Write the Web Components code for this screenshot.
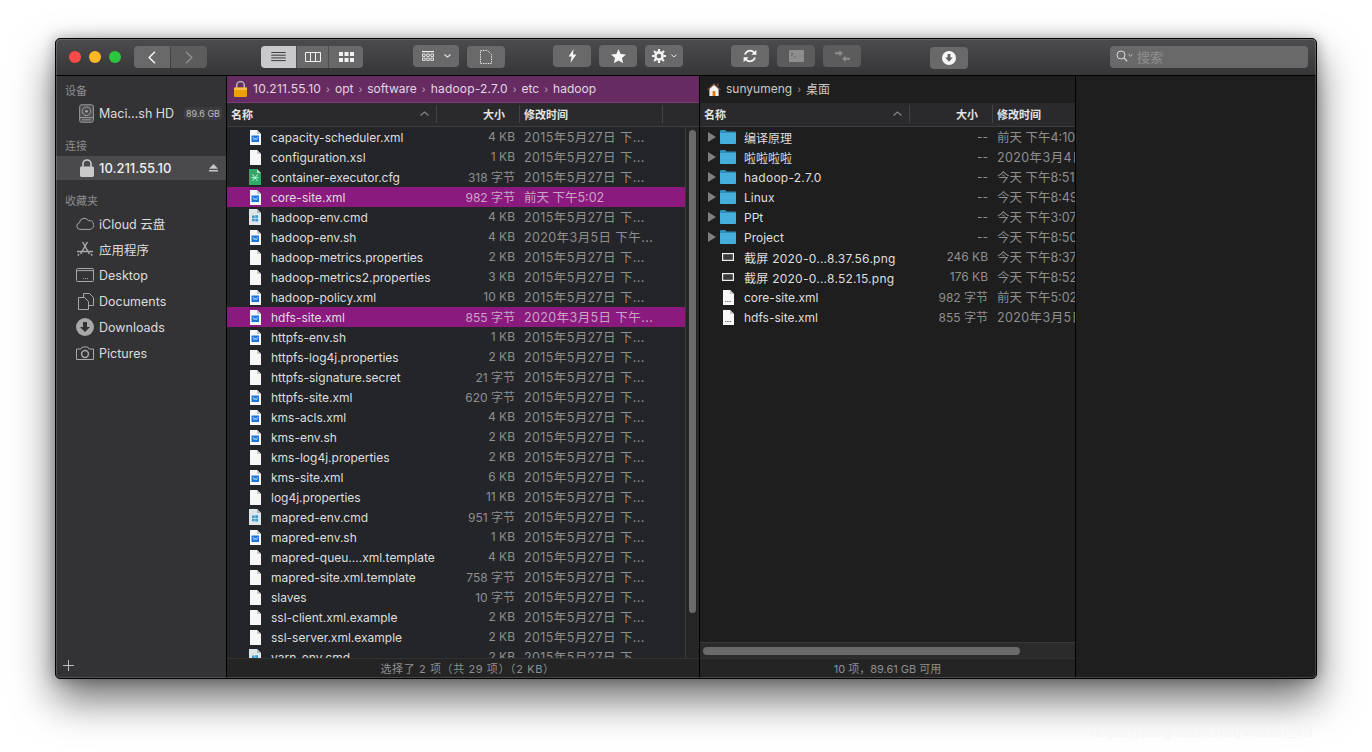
<!DOCTYPE html>
<html lang="zh">
<head>
<meta charset="utf-8">
<title>ForkLift</title>
<style>
  html, body { margin: 0; height: 100%; background: #fff; overflow: hidden; }
  body { padding: 38px 0 0 55px; box-sizing: border-box; position: relative;
         font-family: Inter, "Noto Sans CJK SC", sans-serif; }
  .watermark { position: absolute; left: 1090px; top: 722px; font-size: 15px; color: #f6f6f6; white-space: nowrap; }
</style>
</head>
<body>
<fm-window></fm-window>
<div class="watermark">https://blog.csdn.net/weixin_43</div>

<script>
const FONT = 'Inter, "Noto Sans CJK SC", sans-serif';

const ICONS = {
  list: '<svg viewBox="0 0 16 11"><path d="M0 .5h16M0 3.5h16M0 6.5h16M0 9.5h16" stroke="#2b2b2b" stroke-width="1"/></svg>',
  cols: '<svg viewBox="0 0 16 10"><path d="M.5.5h15v9H.5zM5.5.5v9M10.5.5v9" fill="none" stroke="#f2f2f2"/></svg>',
  grid: '<svg viewBox="0 0 15 10"><path d="M0 0h4v4H0zM5.5 0h4v4h-4zM11 0h4v4h-4zM0 6h4v4H0zM5.5 6h4v4h-4zM11 6h4v4h-4z" fill="#f2f2f2"/></svg>',
  arrange: '<svg viewBox="0 0 12 10"><path d="M0 0h12v1.2H0z" fill="#eee"/><path d="M.5 3h2.6v2.4H.5zM4.7 3h2.6v2.4H4.7zM8.9 3h2.6v2.4H8.9zM.5 7h2.6v2.4H.5zM4.7 7h2.6v2.4H4.7zM8.9 7h2.6v2.4H8.9z" fill="none" stroke="#eee" stroke-width=".9"/></svg>',
  page: '<svg viewBox="0 0 12 14"><path d="M.5.5h7l4 4v9H.5z" fill="none" stroke="#e8e8e8" stroke-dasharray="1.4 1"/></svg>',
  bolt: '<svg viewBox="0 0 9 14"><path d="M5.6 0 .6 7.6h3L2.4 14l6-8.4H5z" fill="#f4f4f4"/></svg>',
  star: '<svg viewBox="0 0 16 15"><path d="m8 0 2.3 5.3 5.7.5-4.3 3.8 1.3 5.6L8 12.2 3 15.2l1.3-5.6L0 5.8l5.7-.5z" fill="#f6f6f6"/></svg>',
  gear: '<svg viewBox="0 0 14 14"><circle cx="7" cy="7" r="3.6" fill="none" stroke="#f2f2f2" stroke-width="2.6"/><path d="M7 0v14M0 7h14M2 2l10 10M12 2 2 12" stroke="#f2f2f2" stroke-width="2.1" stroke-dasharray="2.4 9.2 2.4" /></svg>',
  sync: '<svg viewBox="0 0 14 14"><path d="M2 5.4A5.2 5.2 0 0 1 11 3.6M12 8.6A5.2 5.2 0 0 1 3 10.4" fill="none" stroke="#f4f4f4" stroke-width="1.8"/><path d="M13.4.8v5h-5zM.6 13.2v-5h5z" fill="#f4f4f4"/></svg>',
  term: '<svg viewBox="0 0 15 12"><rect width="15" height="12" rx="1.2" fill="#8e8e8e"/><path d="m2 2.5 2 1.7-2 1.7M4.6 7h2" fill="none" stroke="#5c5c5c" stroke-width=".8"/></svg>',
  compare: '<svg viewBox="0 0 15 12"><path d="M0 2.2h4.4V0l3.4 3.2-3.4 3.2V4.3H0zM15 7.7h-4.4V5.6L7.2 8.8l3.4 3.2V9.8H15z" fill="#8e8e8e"/></svg>',
  download: '<svg viewBox="0 0 14 14"><circle cx="7" cy="7" r="7" fill="#f6f6f6"/><path d="M5.6 3h2.8v3.6h2.4L7 10.8 3.2 6.6h2.4z" fill="#636363"/></svg>',
  chevron: '<svg viewBox="0 0 7 4"><path d="m.5.5 3 2.6 3-2.6" fill="none" stroke="#e8e8e8" stroke-width="1.1"/></svg>',
  back: '<svg viewBox="0 0 8 13"><path d="M7 .7 1.2 6.5 7 12.3" fill="none" stroke="#f2f2f2" stroke-width="1.5"/></svg>',
  forward: '<svg viewBox="0 0 8 13"><path d="m1 .7 5.8 5.8L1 12.3" fill="none" stroke="#8d8d8d" stroke-width="1.5"/></svg>',
  search: '<svg viewBox="0 0 17 12"><circle cx="5" cy="5" r="4" fill="none" stroke="#d8d8d8" stroke-width="1"/><path d="m8 8 3.2 3.4" stroke="#d8d8d8" stroke-width="1.1"/><path d="m12.6 4.4 1.9 1.7 1.9-1.7" fill="none" stroke="#d8d8d8" stroke-width=".9"/></svg>',
  lock: '<svg viewBox="0 0 13 16"><path d="M2.7 7V4.4a3.8 3.8 0 0 1 7.6 0V7" fill="none" stroke="#b8b8b8" stroke-width="1.5"/><rect y="6.6" width="13" height="9.4" rx="1.2" fill="#eda006"/><rect y="6.6" width="13" height="2.4" fill="#f7c04a"/></svg>',
  home: '<svg viewBox="0 0 14 14"><path d="M2.4 6.4 7 2.6l4.6 3.8V14H2.4z" fill="#f1f1f1"/><path d="M5.6 9h2.8v5H5.6z" fill="#e07b12"/><path d="M0 7.4 7 1l7 6.4-.9.9L7 3 .9 8.3z" fill="#6d4c36"/><path d="M10 1.4h1.8v3L10 3z" fill="#6d4c36"/></svg>',
  disk: '<svg viewBox="0 0 16 20"><rect x=".7" y=".7" width="14.6" height="18.6" rx="2" fill="#4d4d50" stroke="#a5a5a5"/><circle cx="8" cy="7.6" r="4.6" fill="none" stroke="#a5a5a5"/><circle cx="8" cy="7.6" r="1.4" fill="#a5a5a5"/><path d="M1 14.4h14M3 16.8h10" stroke="#a5a5a5"/></svg>',
  lockside: '<svg viewBox="0 0 14 18"><path d="M3 8V5a4 4 0 0 1 8 0v3" fill="none" stroke="#c9c9c9" stroke-width="1.6"/><rect y="7.6" width="14" height="10.4" rx="1.4" fill="#c9c9c9"/></svg>',
  eject: '<svg viewBox="0 0 9 8"><path d="M4.5 0 9 4.8H0zM0 6h9v1.6H0z" fill="#c8c8c8"/></svg>',
  cloud: '<svg viewBox="0 0 18 13"><path d="M4 12.4a3.4 3.4 0 0 1-.5-6.7A4.8 4.8 0 0 1 12.4 3.6a4.4 4.4 0 0 1 1.8 8.8z" fill="none" stroke="#a8a8a8"/></svg>',
  apps: '<svg viewBox="0 0 18 16"><path d="M11.4 1 4.6 13M6.6 1l6.8 12M1 10.4h16" fill="none" stroke="#a8a8a8" stroke-width="1.5"/><path d="M1.8 14.6 3 13M16.2 14.6 15 13" stroke="#a8a8a8" stroke-width="1.5"/></svg>',
  desktop: '<svg viewBox="0 0 18 14"><rect x=".5" y=".5" width="17" height="13" rx="1" fill="none" stroke="#a8a8a8"/><path d="M1 2.6h16" stroke="#a8a8a8"/><path d="M7 10.6h1M9 10.6h1M11 10.6h1" stroke="#a8a8a8"/></svg>',
  docs: '<svg viewBox="0 0 16 17"><path d="M5.5.5h6l4 4v8h-10z" fill="#333336" stroke="#a8a8a8"/><path d="M.5 4.5h6l4 4v8h-10z" fill="#333336" stroke="#a8a8a8"/></svg>',
  dl: '<svg viewBox="0 0 18 18"><circle cx="9" cy="9" r="9" fill="#a8a8a8"/><path d="M7 4h4v5h3l-5 5-5-5h3z" fill="#333336"/></svg>',
  pics: '<svg viewBox="0 0 18 14"><path d="M.5 3h4.4l1.4-2h5.4l1.4 2h4.4v10.5H.5z" fill="none" stroke="#a8a8a8"/><circle cx="9" cy="8" r="3.4" fill="none" stroke="#a8a8a8" stroke-width="1.5"/></svg>',
  plus: '<svg viewBox="0 0 11 11"><path d="M5.5 0v11M0 5.5h11" stroke="#bdbdbd"/></svg>',
  folder: '<svg viewBox="0 0 16 14"><path d="M0 1.3C0 .6.5 0 1.2 0h4l1.3 1.6H15c.6 0 1 .5 1 1v10.2c0 .6-.4 1.2-1 1.2H1c-.6 0-1-.5-1-1.2z" fill="#2f8fb8"/><path d="M0 3h16v9.8c0 .7-.4 1.2-1 1.2H1c-.6 0-1-.5-1-1.2z" fill="#45aedd"/></svg>',
  plain: '<svg viewBox="0 0 11 15"><path d="M0 0h7l4 4v11H0z" fill="#f7f7f7"/><path d="M7 0v4h4z" fill="#c9c9c9"/></svg>',
  xml: '<svg viewBox="0 0 11 15"><path d="M0 0h7l4 4v11H0z" fill="#f7f7f7"/><path d="M7 0v4h4z" fill="#c9c9c9"/><path d="M1.5 5.5h7.5v6.5H1.5z" fill="#1a76dc"/><path d="M3 7l1.400 3 1-2 1 2L7.800 7" fill="none" stroke="#a9d8ff" stroke-width=".9"/></svg>',
  green: '<svg viewBox="0 0 12 16"><path d="M0 0h8l4 4v12H0z" fill="#34a866"/><path d="M8 0v4h4z" fill="#b7e5c8"/><path d="M3.5 5.5 8.5 12M8.5 5.5 3.5 12M2.5 8.7h7" stroke="#d5f3e0" stroke-width=".9"/></svg>',
  cmd: '<svg viewBox="0 0 12 16"><path d="M0 0h8l4 4v12H0z" fill="#dfe6ea"/><path d="M8 0v4h4z" fill="#aeb9bf"/><path d="M3 6.6h2.700v2.500H3zM6.300 6.200H9v2.900H6.300zM3 9.700h2.700v2.500H3zM6.300 9.700H9v2.900H6.300z" fill="#3b9bcf"/></svg>',
  small: '<svg viewBox="0 0 11 15"><path d="M0 0h7l4 4v11H0z" fill="#f7f7f7"/><path d="M7 0v4h4z" fill="#c9c9c9"/><path d="M2 11.500h1.200M4 11.500h1.600M6.400 11.500h1.600" stroke="#777" stroke-width="1.2"/></svg>',
  shot: '<svg viewBox="0 0 12 8"><rect x=".6" y=".6" width="10.8" height="6.8" fill="#3a3a3a" stroke="#f0f0f0" stroke-width="1.2"/></svg>'
};

class FmIcon extends HTMLElement {
  constructor() {
    super();
    this.attachShadow({ mode: "open" });
  }
  connectedCallback() {
    const w = this.getAttribute("w") || 14;
    const h = this.getAttribute("h") || 14;
    this.shadowRoot.innerHTML = `
      <style>
        :host { display: block; flex: none; width: ${w}px; height: ${h}px; }
        svg { display: block; width: 100%; height: 100%; }
      </style>
      ${ICONS[this.getAttribute("name")]}`;
  }
}
customElements.define("fm-icon", FmIcon);

class FmButton extends HTMLElement {
  constructor() {
    super();
    this.attachShadow({ mode: "open" });
    this.shadowRoot.innerHTML = `
      <style>
        :host { display: flex; align-items: center; justify-content: center; gap: 5px; flex: none;
                height: 22px; width: 38px; border-radius: 4px; background: #696969; box-sizing: border-box; }
        :host([dim]) { background: #5c5c5c; }
        :host([active]) { background: #c9c9cb; }
      </style>
      <slot></slot>`;
  }
}
customElements.define("fm-button", FmButton);

class FmToolbar extends HTMLElement {
  constructor() {
    super();
    this.attachShadow({ mode: "open" });
    this.shadowRoot.innerHTML = `
      <style>
        :host { display: flex; height: 37px; box-sizing: border-box; padding-left: 13px; align-items: flex-start;
                background: linear-gradient(#4c4c4e, #363638); border-bottom: 1px solid #000; flex: none; }
        .lights { display: flex; gap: 8px; margin-top: 12px; }
        .lights i { width: 12px; height: 12px; border-radius: 50%; }
        .seg { display: flex; margin-top: 7px; gap: 1px; }
        .seg fm-button { border-radius: 0; }
        .seg fm-button:first-child { border-radius: 4px 0 0 4px; }
        .seg fm-button:last-child { border-radius: 0 4px 4px 0; }
        .row { display: flex; gap: 8px; margin-top: 6px; }
        .search { width: 198px; height: 22px; margin: 7px 0 0 142px; border-radius: 4px; background: #696969;
                  display: flex; align-items: center; gap: 4px; padding: 0 0 2px 6px; box-sizing: border-box;
                  color: #8f8f8f; font: 13px ${FONT}; }
      </style>
      <div class="lights">
        <i style="background:#fc4b46"></i><i style="background:#fdb824"></i><i style="background:#2ac73f"></i>
      </div>
      <div class="seg" style="margin-left:13px">
        <fm-button style="width:36px"><fm-icon name="back" w="8" h="13"></fm-icon></fm-button>
        <fm-button dim style="width:36px"><fm-icon name="forward" w="8" h="13"></fm-icon></fm-button>
      </div>
      <div class="seg" style="margin-left:54px;gap:0">
        <fm-button active style="width:35px"><fm-icon name="list" w="15" h="10"></fm-icon></fm-button>
        <fm-button style="width:33px;border-left:1px solid #4d4d4d;border-right:1px solid #4d4d4d"><fm-icon name="cols" w="16" h="10"></fm-icon></fm-button>
        <fm-button style="width:34px"><fm-icon name="grid" w="15" h="10"></fm-icon></fm-button>
      </div>
      <fm-button style="margin:6px 0 0 50px;width:46px;gap:10px"><fm-icon name="arrange" w="12" h="10"></fm-icon><fm-icon name="chevron" w="7" h="4"></fm-icon></fm-button>
      <fm-button style="margin:7px 0 0 8px"><fm-icon name="page" w="12" h="14"></fm-icon></fm-button>
      <div class="row" style="margin-left:48px">
        <fm-button><fm-icon name="bolt" w="9" h="14"></fm-icon></fm-button>
        <fm-button><fm-icon name="star" w="15" h="14"></fm-icon></fm-button>
        <fm-button><fm-icon name="gear" w="14" h="14"></fm-icon><fm-icon name="chevron" w="6" h="4"></fm-icon></fm-button>
      </div>
      <div class="row" style="margin-left:48px">
        <fm-button><fm-icon name="sync" w="14" h="14"></fm-icon></fm-button>
        <fm-button dim><fm-icon name="term" w="15" h="12"></fm-icon></fm-button>
        <fm-button dim><fm-icon name="compare" w="15" h="12"></fm-icon></fm-button>
      </div>
      <fm-button style="margin:8px 0 0 69px"><fm-icon name="download" w="14" h="14"></fm-icon></fm-button>
      <div class="search"><fm-icon name="search" w="17" h="12"></fm-icon><span>搜索</span></div>`;
  }
}
customElements.define("fm-toolbar", FmToolbar);

class SideItem extends HTMLElement {
  constructor() {
    super();
    this.attachShadow({ mode: "open" });
  }
  connectedCallback() {
    const icon = this.getAttribute("icon");
    const w = this.getAttribute("w") || 18;
    const h = this.getAttribute("h") || 16;
    this.shadowRoot.innerHTML = `
      <style>
        :host { display: flex; align-items: center; height: 26px; box-sizing: border-box; flex: none;
                color: #dcdcdc; font-size: 12.5px; white-space: nowrap; position: relative; }
        .ic { width: 43px; display: flex; justify-content: flex-end; padding-right: 5px; box-sizing: border-box; flex: none; }
        :host([sel]) { background: #4a4a4c; height: 24px; color: #f0f0f0; font-weight: 500; font-size: 13px; }
      </style>
      <div class="ic"><fm-icon name="${icon}" w="${w}" h="${h}"></fm-icon></div>
      <slot></slot>`;
  }
}
customElements.define("side-item", SideItem);

class FmSidebar extends HTMLElement {
  constructor() {
    super();
    this.attachShadow({ mode: "open" });
    this.shadowRoot.innerHTML = `
      <style>
        :host { display: flex; flex-direction: column; width: 170px; flex: none; background: #333336;
                border-right: 1px solid #000; font-family: ${FONT}; position: relative; }
        h4 { margin: 0; padding-left: 9px; font: 400 11px/14px ${FONT}; color: #8d8d8d; flex: none; }
        .badge { margin-left: auto; margin-right: 4px; font-size: 9px; color: #bdbdbd; background: #3c3c3f; padding: 1px 2px; border-radius: 3px; }
        .eject { margin-left: auto; margin-right: 8px; }
        .add { position: absolute; left: 7px; bottom: 7px; }
      </style>
      <h4 style="margin-top:8px">设备</h4>
      <side-item icon="disk" w="15" h="19" style="margin-top:2px">Maci…sh HD<span class="badge">89.6 GB</span></side-item>
      <h4 style="margin-top:13px">连接</h4>
      <side-item sel icon="lockside" w="14" h="18" style="margin-top:3px">10.211.55.10<fm-icon class="eject" name="eject" w="9" h="8"></fm-icon></side-item>
      <h4 style="margin-top:14px">收藏夹</h4>
      <side-item icon="cloud" w="18" h="13" style="margin-top:2px">iCloud 云盘</side-item>
      <side-item icon="apps">应用程序</side-item>
      <side-item icon="desktop" h="14">Desktop</side-item>
      <side-item icon="docs" w="16" h="17">Documents</side-item>
      <side-item icon="dl" h="18">Downloads</side-item>
      <side-item icon="pics" h="14">Pictures</side-item>
      <fm-icon class="add" name="plus" w="11" h="11"></fm-icon>`;
  }
}
customElements.define("fm-sidebar", FmSidebar);

class FileRow extends HTMLElement {
  constructor() {
    super();
    this.attachShadow({ mode: "open" });
  }
  connectedCallback() {
    const type = this.getAttribute("type");
    const date = this.getAttribute("date");
    const folder = type === "folder";
    const iw = folder ? 16 : type === "shot" ? 12 : type === "green" || type === "cmd" ? 12 : 11;
    const ih = folder ? 14 : type === "shot" ? 8 : type === "green" || type === "cmd" ? 16 : 15;
    this.shadowRoot.innerHTML = `
      <style>
        :host { display: grid; grid-template-columns: 235px 53px 1fr; height: 20px; flex: none;
                align-items: center; white-space: nowrap; font-size: 12.5px; color: #8f8f8f; overflow: hidden; }
        :host([sel]) { background: #8a1a7e; color: #c9a5c5; }
        .name { display: flex; align-items: center; color: #dedede; font-size: 12px; padding-left: 20px; min-width: 0; overflow: hidden; }
        .tri { width: 0; height: 0; border-left: 8px solid #7f7f7f; border-top: 5px solid transparent; border-bottom: 5px solid transparent; margin: 0 4px 0 -12px; flex: none; }
        .ic { width: 16px; display: flex; justify-content: center; margin-right: 8px; flex: none; }
        .size { text-align: right; font-size: 12px; margin-top: -1px; }
        .date { padding-left: 9px; overflow: hidden; margin-top: -1px; }
        .date.long { letter-spacing: .4px; }
      </style>
      <div class="name">
        ${folder ? '<i class="tri"></i>' : ""}
        <div class="ic"><fm-icon name="${type}" w="${iw}" h="${ih}"></fm-icon></div>
        <slot></slot>
      </div>
      <div class="size">${this.getAttribute("size")}</div>
      <div class="date ${/^\d/.test(date) ? "long" : ""}">${date}</div>`;
  }
}
customElements.define("file-row", FileRow);

class FmPane extends HTMLElement {
  constructor() {
    super();
    this.attachShadow({ mode: "open" });
    this.shadowRoot.innerHTML = `
      <style>
        :host { display: flex; flex-direction: column; box-sizing: border-box; border-right: 1px solid #000;
                flex: none; min-height: 0; background: #1e1e1e; font-family: ${FONT}; overflow: hidden; position: relative; }
        :host([active]) { background: #242528; }
        .path { height: 27px; flex: none; display: flex; align-items: center; padding: 0 0 2px 7px; box-sizing: border-box;
                font-size: 12px; color: #c8c8c8; white-space: nowrap; }
        :host([active]) .path { background: #662c62; color: #e4d5e2; border-bottom: 1px solid #7b3f78; padding-bottom: 1px; }
        .head { display: grid; grid-template-columns: 210px 83px 143px 1fr; height: 24px; flex: none;
                align-items: center; background: #2a2a2c; border-bottom: 1px solid #3e3e3e; box-sizing: border-box;
                color: #e4e4e4; font-size: 11px; font-weight: 600; padding-bottom: 2px; }
        .head > div { height: 18px; display: flex; align-items: center; box-sizing: border-box; }
        .h-name { padding-left: 4px; justify-content: space-between; padding-right: 7px; border-right: 1px solid #434345; }
        .h-size { justify-content: flex-end; padding-right: 14px; border-right: 1px solid #434345; }
        .h-date { padding-left: 4px; }
        :host([active]) .h-date { border-right: 1px solid #434345; }
        .body { flex: 1; display: flex; min-height: 0; }
        .list { flex: 1; min-width: 0; display: flex; flex-direction: column; overflow: hidden; }
        .status { height: 20px; flex: none; display: flex; align-items: center; justify-content: center;
                  color: #8f8f8f; font-size: 11px; background: #242424; border-top: 1px solid #333;
                  box-sizing: border-box; padding-bottom: 2px; }
      </style>
      <div class="path"><slot name="path"></slot></div>
      <div class="head">
        <div class="h-name"><span>名称</span><svg width="9" height="5" viewBox="0 0 9 5"><path d="m.5 4.5 4-3.5 4 3.5" fill="none" stroke="#858585" stroke-width="1.2"/></svg></div>
        <div class="h-size">大小</div>
        <div class="h-date">修改时间</div>
      </div>
      <div class="body">
        <div class="list"><slot></slot></div>
        <slot name="vbar"></slot>
      </div>
      <slot name="hbar"></slot>
      <div class="status"><slot name="status"></slot></div>`;
  }
}
customElements.define("fm-pane", FmPane);

class FmScroll extends HTMLElement {
  constructor() {
    super();
    this.attachShadow({ mode: "open" });
  }
  connectedCallback() {
    const v = this.hasAttribute("vertical");
    this.shadowRoot.innerHTML = `
      <style>
        :host { display: flex; flex: none; box-sizing: border-box; background: #2b2b2b; }
        :host([vertical]) { width: 14px; padding: 3px 3px 0 3px; border-left: 1px solid #3a3a3a; background: #262626; }
        :host(:not([vertical])) { height: 16px; padding: 4px 3px; border-top: 1px solid #3a3a3a; }
        i { display: block; background: #6a6a6a; border-radius: 4px; ${v ? "width: 8px; height: 483px;" : "width: 317px; height: 8px;"} }
      </style><i></i>`;
  }
}
customElements.define("fm-scroll", FmScroll);

class FmWindow extends HTMLElement {
  constructor() {
    super();
    this.attachShadow({ mode: "open" });
    this.shadowRoot.innerHTML = `
      <style>
        :host { display: flex; flex-direction: column; width: 1262px; height: 641px; box-sizing: border-box; position: relative;
                border: 1px solid #000; border-radius: 5px; overflow: hidden; background: #1e1e1e;
                box-shadow: 0 20px 42px rgba(0,0,0,.58), 0 0 14px rgba(0,0,0,.3); }
        :host::after { content: ""; position: absolute; inset: 0; border: 1px solid rgba(255,255,255,.16); border-radius: 4px; pointer-events: none; }
        .main { flex: 1; display: flex; min-height: 0; }
        .empty { flex: 1; background: #1e1e1e; }
        .left { width: 473px; }
        .right { width: 376px; }
        .path { display: flex; align-items: center; gap: 5px; white-space: nowrap; }
        .path .lock { margin-right: 1px; }
        .sep { font-size: 10px; opacity: .7; }
        .ip { letter-spacing: .25px; }
        .ver { letter-spacing: .2px; }
        .sel-status { letter-spacing: .6px; margin-left: 9px; }
        .num { letter-spacing: .25px; }
      </style>
      <fm-toolbar></fm-toolbar>
      <div class="main">
        <fm-sidebar></fm-sidebar>
        <fm-pane active class="left" id="left">
          <div slot="path" class="path"><fm-icon class="lock" name="lock" w="13" h="16"></fm-icon><span class="ip">10.211.55.10</span><span class="sep">›</span><span>opt</span><span class="sep">›</span><span>software</span><span class="sep">›</span><span class="ver">hadoop-2.7.0</span><span class="sep">›</span><span>etc</span><span class="sep">›</span><span>hadoop</span></div>
          <fm-scroll slot="vbar" vertical></fm-scroll>
          <span slot="status" class="sel-status">选择了 2 项（共 29 项）（2 KB）</span>
        </fm-pane>
        <fm-pane class="right" id="right">
          <div slot="path" class="path"><fm-icon name="home" w="14" h="14"></fm-icon><span>sunyumeng</span><span class="sep">›</span><span>桌面</span></div>
          <fm-scroll slot="hbar"></fm-scroll>
          <span slot="status">10 项，89.61 GB 可用</span>
        </fm-pane>
        <div class="empty"></div>
      </div>`;
    this.fill("left", LEFT_FILES);
    this.fill("right", RIGHT_FILES);
  }
  fill(id, files) {
    const pane = this.shadowRoot.getElementById(id);
    for (const [type, name, size, date, sel] of files) {
      const row = document.createElement("file-row");
      row.setAttribute("type", type);
      row.setAttribute("size", size);
      row.setAttribute("date", date);
      if (sel) row.setAttribute("sel", "");
      const label = document.createElement("span");
      label.textContent = name;
      // digit-heavy names run a little wider in the right pane
      if (id === "right" && /\d/.test(name)) label.className = "num";
      row.appendChild(label);
      pane.appendChild(row);
    }
  }
}

const OLD = "2015年5月27日 下...";
const LEFT_FILES = [
  ["xml", "capacity-scheduler.xml", "4 KB", OLD],
  ["plain", "configuration.xsl", "1 KB", OLD],
  ["green", "container-executor.cfg", "318 字节", OLD],
  ["xml", "core-site.xml", "982 字节", "前天 下午5:02", true],
  ["cmd", "hadoop-env.cmd", "4 KB", OLD],
  ["xml", "hadoop-env.sh", "4 KB", "2020年3月5日 下午..."],
  ["plain", "hadoop-metrics.properties", "2 KB", OLD],
  ["plain", "hadoop-metrics2.properties", "3 KB", OLD],
  ["xml", "hadoop-policy.xml", "10 KB", OLD],
  ["xml", "hdfs-site.xml", "855 字节", "2020年3月5日 下午...", true],
  ["xml", "httpfs-env.sh", "1 KB", OLD],
  ["plain", "httpfs-log4j.properties", "2 KB", OLD],
  ["plain", "httpfs-signature.secret", "21 字节", OLD],
  ["xml", "httpfs-site.xml", "620 字节", OLD],
  ["xml", "kms-acls.xml", "4 KB", OLD],
  ["xml", "kms-env.sh", "2 KB", OLD],
  ["plain", "kms-log4j.properties", "2 KB", OLD],
  ["xml", "kms-site.xml", "6 KB", OLD],
  ["plain", "log4j.properties", "11 KB", OLD],
  ["cmd", "mapred-env.cmd", "951 字节", OLD],
  ["xml", "mapred-env.sh", "1 KB", OLD],
  ["plain", "mapred-queu....xml.template", "4 KB", OLD],
  ["plain", "mapred-site.xml.template", "758 字节", OLD],
  ["plain", "slaves", "10 字节", OLD],
  ["plain", "ssl-client.xml.example", "2 KB", OLD],
  ["plain", "ssl-server.xml.example", "2 KB", OLD],
  ["cmd", "yarn-env.cmd", "2 KB", OLD]
];
const RIGHT_FILES = [
  ["folder", "编译原理", "--", "前天 下午4:10"],
  ["folder", "啦啦啦啦", "--", "2020年3月4日"],
  ["folder", "hadoop-2.7.0", "--", "今天 下午8:51"],
  ["folder", "Linux", "--", "今天 下午8:49"],
  ["folder", "PPt", "--", "今天 下午3:07"],
  ["folder", "Project", "--", "今天 下午8:50"],
  ["shot", "截屏 2020-0...8.37.56.png", "246 KB", "今天 下午8:37"],
  ["shot", "截屏 2020-0...8.52.15.png", "176 KB", "今天 下午8:52"],
  ["small", "core-site.xml", "982 字节", "前天 下午5:02"],
  ["small", "hdfs-site.xml", "855 字节", "2020年3月5日"]
];

customElements.define("fm-window", FmWindow);
</script>
</body>
</html>
